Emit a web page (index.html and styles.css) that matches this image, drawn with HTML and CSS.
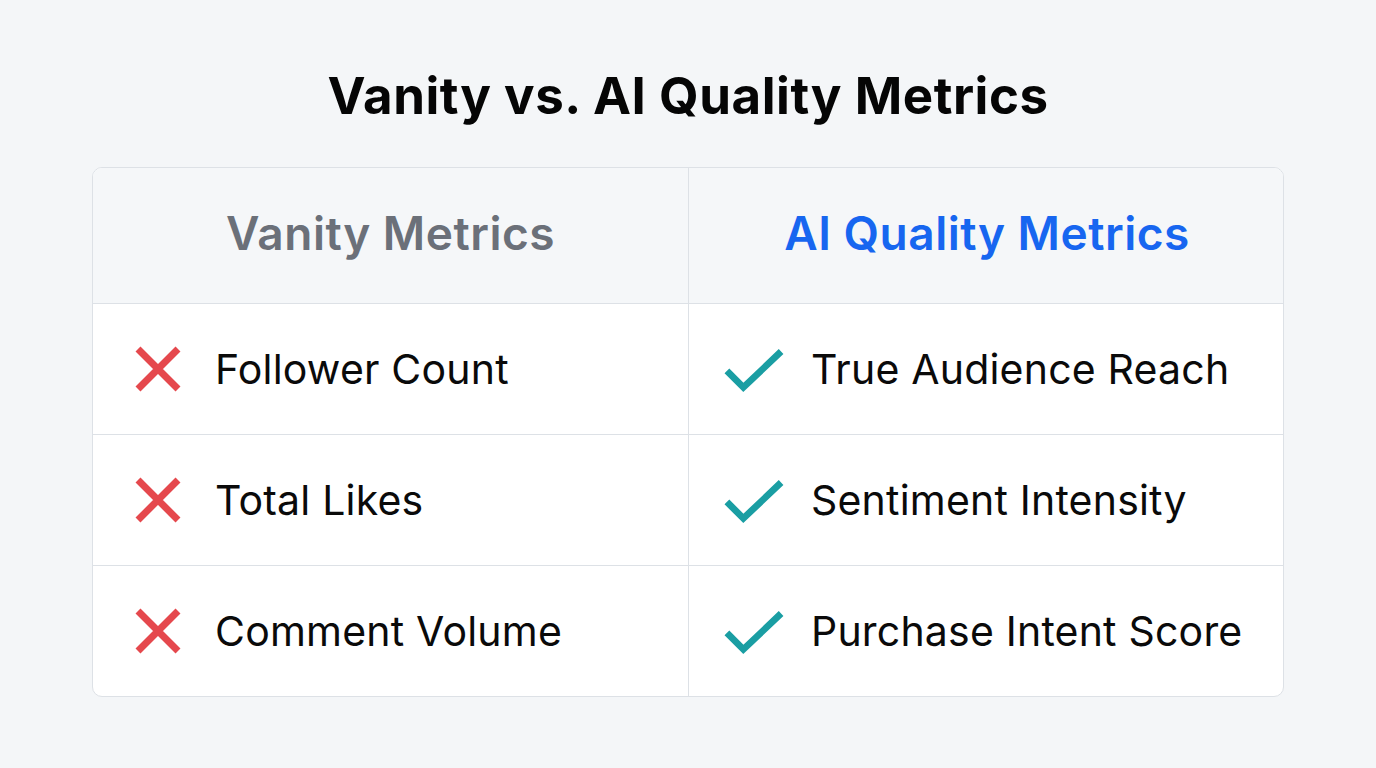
FILE: index.html
```html
<!DOCTYPE html>
<html lang="en">
<head>
<meta charset="utf-8">
<title>Vanity vs. AI Quality Metrics</title>
<link rel="stylesheet" href="styles.css">
</head>
<body>
<main class="page">
  <h1 class="title">Vanity vs. AI Quality Metrics</h1>
  <div class="table">
    <div class="cell head"><span class="head-text vanity">Vanity Metrics</span></div>
    <div class="cell head"><span class="head-text ai">AI Quality Metrics</span></div>

    <div class="cell item">
      <span class="icon"><svg viewBox="0 0 48 48" width="48" height="48"><path d="M4 4 L44 44 M44 4 L4 44" stroke="#e5484d" stroke-width="7" fill="none"/></svg></span>
      <span class="label">Follower Count</span>
    </div>
    <div class="cell item">
      <span class="icon"><svg viewBox="0 0 62 48" width="62" height="48"><path d="M3 26 L20 43 L59 6" stroke="#1a9ea3" stroke-width="7" fill="none"/></svg></span>
      <span class="label">True Audience Reach</span>
    </div>

    <div class="cell item">
      <span class="icon"><svg viewBox="0 0 48 48" width="48" height="48"><path d="M4 4 L44 44 M44 4 L4 44" stroke="#e5484d" stroke-width="7" fill="none"/></svg></span>
      <span class="label">Total Likes</span>
    </div>
    <div class="cell item">
      <span class="icon"><svg viewBox="0 0 62 48" width="62" height="48"><path d="M3 26 L20 43 L59 6" stroke="#1a9ea3" stroke-width="7" fill="none"/></svg></span>
      <span class="label">Sentiment Intensity</span>
    </div>

    <div class="cell item">
      <span class="icon"><svg viewBox="0 0 48 48" width="48" height="48"><path d="M4 4 L44 44 M44 4 L4 44" stroke="#e5484d" stroke-width="7" fill="none"/></svg></span>
      <span class="label">Comment Volume</span>
    </div>
    <div class="cell item">
      <span class="icon"><svg viewBox="0 0 62 48" width="62" height="48"><path d="M3 26 L20 43 L59 6" stroke="#1a9ea3" stroke-width="7" fill="none"/></svg></span>
      <span class="label">Purchase Intent Score</span>
    </div>
  </div>
</main>
</body>
</html>
```

FILE: styles.css
```css
* { box-sizing: border-box; }
html, body { margin: 0; padding: 0; }
body {
  width: 1376px;
  height: 768px;
  background: #f4f6f8;
  font-family: Inter, "Noto Sans", sans-serif;
  color: #0b0b0b;
  overflow: hidden;
}
.page {
  display: flex;
  flex-direction: column;
  align-items: center;
  padding-top: 64px;
}
.title {
  margin: 0;
  font-size: 51px;
  font-weight: 700;
  line-height: 64px;
  letter-spacing: 0.55px;
  color: #050505;
}
.table {
  margin-top: 39px;
  width: 1192px;
  display: grid;
  grid-template-columns: 596px 596px;
  grid-template-rows: 136px 131px 131px 130px;
  border: 1px solid #dde1e6;
  border-radius: 10px;
  overflow: hidden;
  background: #ffffff;
}
.cell {
  border-bottom: 1px solid #dde1e6;
}
.cell:nth-child(odd) { border-right: 1px solid #dde1e6; }
.cell:nth-last-child(-n+2) { border-bottom: none; }
.head {
  background: #f5f7f9;
  display: flex;
  align-items: center;
  justify-content: center;
  padding-bottom: 6px;
}
.head-text {
  font-size: 46px;
  font-weight: 600;
  letter-spacing: 0.5px;
}
.vanity { color: #6b7079; }
.ai { color: #1766f0; }
.item {
  display: flex;
  align-items: center;
  padding-left: 35px;
  gap: 27px;
}
.icon {
  width: 60px;
  display: flex;
  justify-content: center;
  align-items: center;
}
.label {
  font-size: 41px;
  font-weight: 400;
  letter-spacing: 0.2px;
  color: #0a0a0a;
}
```
